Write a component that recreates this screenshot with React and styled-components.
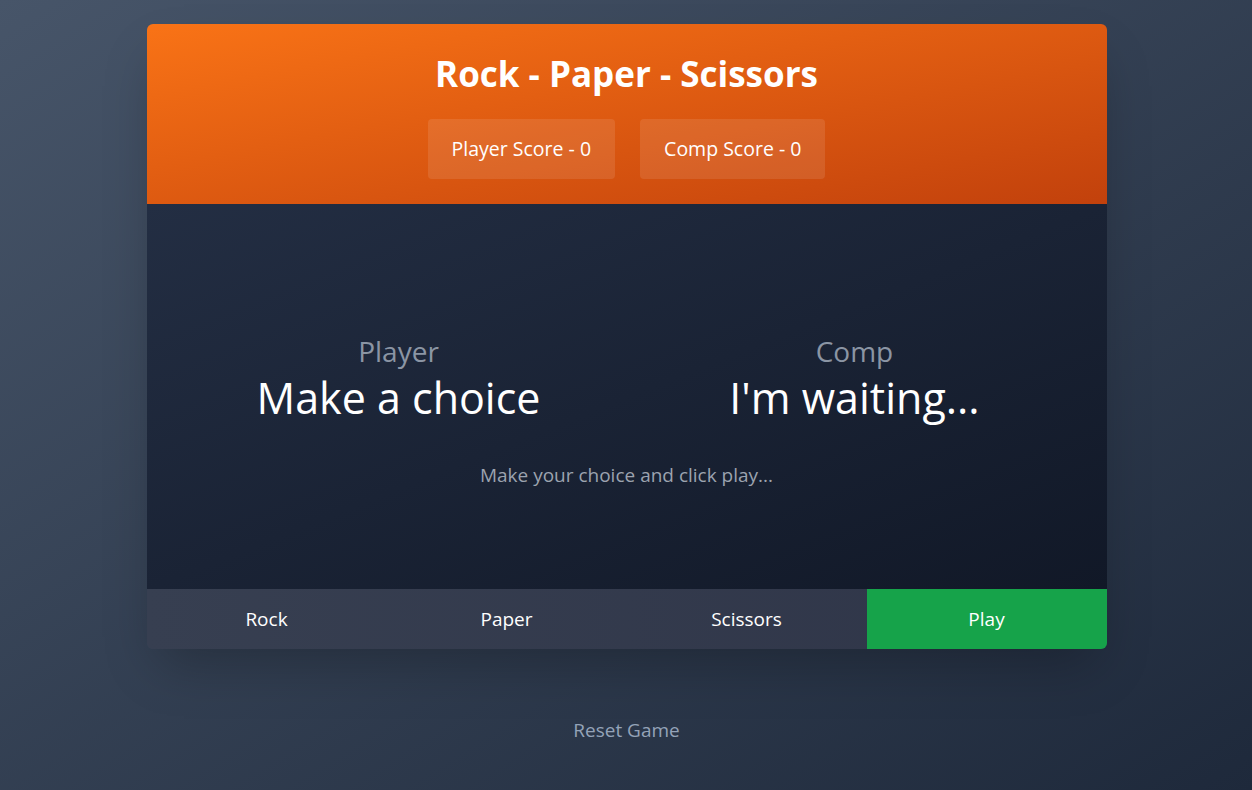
import React, { useState } from 'react'
import styled, { createGlobalStyle } from 'styled-components'

const GlobalStyle = createGlobalStyle`
  * { box-sizing: border-box; }
  html, body { margin: 0; padding: 0; }
  body {
    min-height: 100vh;
    font-family: 'Segoe UI', 'Open Sans', 'Noto Sans', sans-serif;
    background: linear-gradient(to bottom right, #475569, #1e293b);
    color: #fff;
  }
`

const Page = styled.div`
  min-height: 100vh;
  display: flex;
  flex-direction: column;
  align-items: center;
  padding: 24px 0 0 1px;
`

const Card = styled.div`
  width: 960px;
  border-radius: 6px;
  overflow: hidden;
  box-shadow: 0 25px 50px -12px rgba(0, 0, 0, 0.25);
`

const Header = styled.header`
  height: 180px;
  padding-top: 28px;
  background: linear-gradient(to bottom right, #f97316, #c2410c);
  display: flex;
  flex-direction: column;
  align-items: center;
`

const Title = styled.h1`
  margin: 0;
  font-size: 35px;
  line-height: 44px;
  font-weight: 700;
`

const Scores = styled.div`
  display: flex;
  gap: 25px;
  margin-top: 23px;
`

const ScoreBox = styled.div`
  padding: 16px 24px;
  border-radius: 4px;
  background: rgba(255, 255, 255, 0.1);
  font-size: 19.5px;
  line-height: 28px;
`

const Arena = styled.main`
  height: 385px;
  background: linear-gradient(to bottom right, #232e43, #111827);
  padding: 128px 48px 0;
`

const Sides = styled.div`
  display: grid;
  grid-template-columns: 1fr 1fr;
  gap: 48px;
`

const Side = styled.div`
  text-align: center;
`

const SideLabel = styled.div`
  font-size: 28px;
  line-height: 38px;
  color: #8b95a4;
`

const SideChoice = styled.div`
  font-size: 43px;
  line-height: 56px;
  color: #fff;
`

const Message = styled.p`
  margin: 35px 0 0;
  text-align: center;
  font-size: 19px;
  line-height: 28px;
  color: #9ca3af;
`

const Controls = styled.div`
  display: grid;
  grid-template-columns: repeat(4, 1fr);
  background: linear-gradient(to right, #373f51, #2f3548);
`

const ControlButton = styled.button`
  height: 60px;
  border: none;
  background: ${(p) => (p.$primary ? '#16a34a' : 'transparent')};
  color: #fff;
  font-family: inherit;
  font-size: 19px;
  cursor: pointer;

  &:hover {
    background: ${(p) => (p.$primary ? '#15803d' : 'rgba(255,255,255,0.05)')};
  }
`

const ResetLink = styled.button`
  margin-top: 66px;
  border: none;
  background: none;
  font-family: inherit;
  font-size: 19px;
  line-height: 28px;
  color: #94a3b8;
  cursor: pointer;
`

export default function App() {
  const [playerScore, setPlayerScore] = useState(0)
  const [compScore, setCompScore] = useState(0)

  return (
    <>
      <GlobalStyle />
      <Page>
        <Card>
          <Header>
            <Title>Rock - Paper - Scissors</Title>
            <Scores>
              <ScoreBox>Player Score - {playerScore}</ScoreBox>
              <ScoreBox>Comp Score - {compScore}</ScoreBox>
            </Scores>
          </Header>
          <Arena>
            <Sides>
              <Side>
                <SideLabel>Player</SideLabel>
                <SideChoice>Make a choice</SideChoice>
              </Side>
              <Side>
                <SideLabel>Comp</SideLabel>
                <SideChoice>I'm waiting...</SideChoice>
              </Side>
            </Sides>
            <Message>Make your choice and click play...</Message>
          </Arena>
          <Controls>
            <ControlButton>Rock</ControlButton>
            <ControlButton>Paper</ControlButton>
            <ControlButton>Scissors</ControlButton>
            <ControlButton $primary>Play</ControlButton>
          </Controls>
        </Card>
        <ResetLink
          onClick={() => {
            setPlayerScore(0)
            setCompScore(0)
          }}
        >
          Reset Game
        </ResetLink>
      </Page>
    </>
  )
}
